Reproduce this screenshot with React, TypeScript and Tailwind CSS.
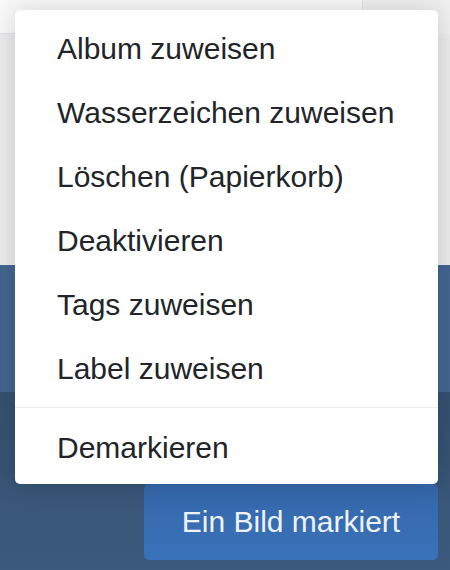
import React from "react";

const items = [
  "Album zuweisen",
  "Wasserzeichen zuweisen",
  "Löschen (Papierkorb)",
  "Deaktivieren",
  "Tags zuweisen",
  "Label zuweisen",
];

export default function App() {
  return (
    <div
      className="relative w-[450px] h-[570px] overflow-hidden flex flex-col"
      style={{ fontFamily: '"Liberation Sans", Arial, sans-serif' }}
    >
      <div className="h-[34px] flex shrink-0">
        <div className="w-[363px] bg-[#f9f9fa] border-b border-r border-[#dfe4ea]" />
        <div className="flex-1 bg-[#f0f0f0]" />
      </div>
      <div className="h-[231px] bg-[#ebebeb] shrink-0" />
      <div className="h-[127px] bg-[#42658f] shrink-0" />
      <div className="flex-1 bg-gradient-to-b from-[#34506f] to-[#3b5a7d] flex justify-end pr-[12px] pt-[92px]">
        <div className="w-[294px] h-[76px] rounded-[5px] bg-gradient-to-b from-[#3467a9] to-[#3a72b9] text-[#eef2f7] text-[30px] flex items-center justify-center leading-none">
          Ein Bild markiert
        </div>
      </div>

      <div className="absolute left-[15px] top-[10px] w-[423px] h-[474px] bg-white rounded-[5px] shadow-[0_0_24px_rgba(0,0,0,0.16)] pt-[7px] pb-[4px] flex flex-col">
        {items.map((t) => (
          <div
            key={t}
            className="h-[64px] flex items-center pl-[42px] text-[30px] leading-none text-[#212529]"
          >
            {t}
          </div>
        ))}
        <div className="mt-[6px] mb-[8px] h-px bg-[#e9ecef]" />
        <div className="h-[64px] flex items-center pl-[42px] text-[30px] leading-none text-[#212529]">
          Demarkieren
        </div>
      </div>
    </div>
  );
}
